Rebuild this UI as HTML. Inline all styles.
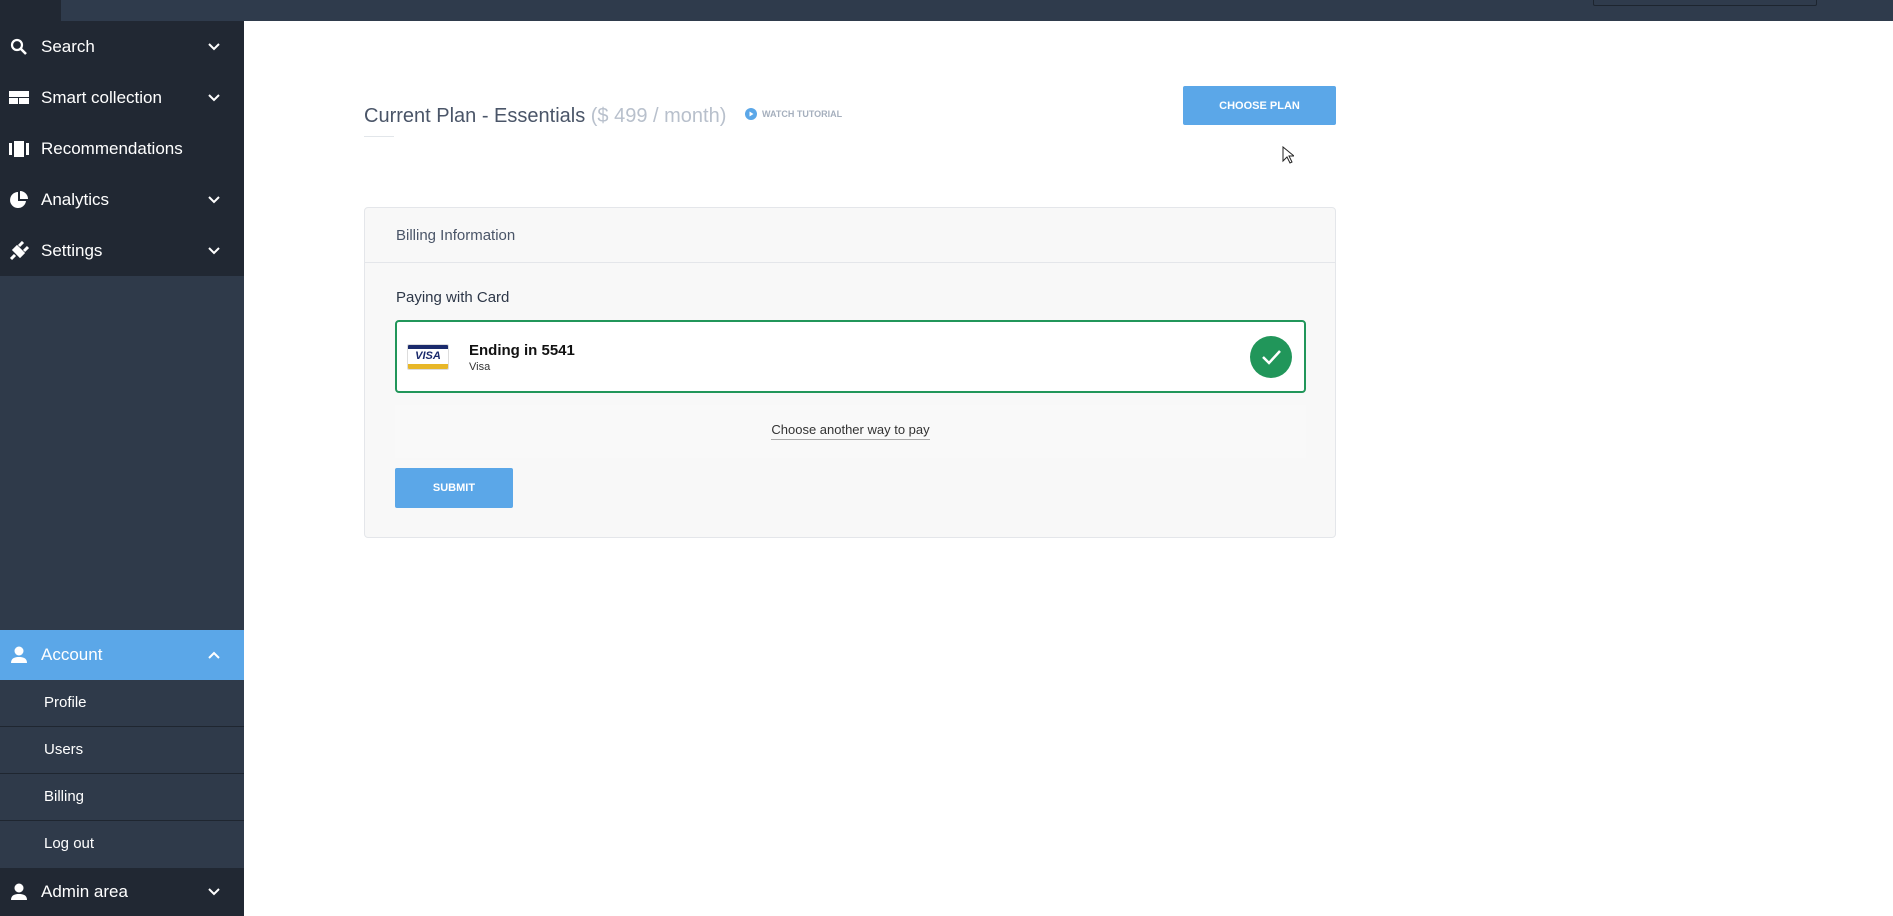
<!DOCTYPE html>
<html><head><meta charset="utf-8"><style>
*{margin:0;padding:0;box-sizing:border-box}
body{width:1893px;height:916px;overflow:hidden;background:#fff;font-family:"Liberation Sans",sans-serif;position:relative}
.top{position:absolute;left:61px;top:0;width:1832px;height:21px;background:#2f3b4c}
.srch{position:absolute;left:1532px;top:-2px;width:224px;height:8px;border:1px solid #1d252f;border-radius:2px}
.side{position:absolute;left:0;top:0;width:244px;height:916px;background:#2f3a4a}
.dark{position:absolute;left:0;top:0;width:244px;height:276px;background:#212833}
.item{position:absolute;left:0;width:244px;height:51px;color:#fff;font-size:17px;display:flex;align-items:center}
.item .ic{position:absolute;left:9px;top:50%;transform:translateY(-50%);width:20px;height:20px}
.item .tx{position:absolute;left:41px}
.item .ch{position:absolute;left:208px;top:50%;transform:translateY(-50%)}
.sub{position:absolute;left:0;width:244px;height:47px;border-bottom:1px solid #1f2630;color:#fff;font-size:15px;line-height:46px;padding-left:44px}
h1{position:absolute;left:364px;top:105px;font-weight:normal;font-size:20px;color:#4a5568;white-space:nowrap}
h1 span{color:#b8c0cc}
.ul{position:absolute;left:364px;top:136px;width:30px;height:1px;background:#e2e6ea}
.wt{position:absolute;left:745px;top:108px;font-size:9px;font-weight:bold;color:#a5afbd;display:flex;align-items:center;gap:5px}
.btn{position:absolute;background:#5ba7e8;color:#fff;font-weight:bold;font-size:11px;display:flex;align-items:center;justify-content:center;border-radius:2px}
.card{position:absolute;left:364px;top:207px;width:972px;height:331px;background:#f8f8f8;border:1px solid #e4e6ea;border-radius:4px}
.ch2{position:absolute;left:0;top:0;width:100%;height:55px;border-bottom:1px solid #e4e6ea;font-size:15px;color:#4a5568;padding-left:31px;line-height:55px}
</style></head><body>
<div class="side">
<div class="dark"></div>
<div class="item" style="top:21px"><svg class="ic" viewBox="0 0 20 20"><circle cx="8" cy="8" r="5" fill="none" stroke="#fff" stroke-width="2.2"/><path d="M12 12l5 5" stroke="#fff" stroke-width="2.6"/></svg><span class="tx">Search</span><svg class="ch" width="12" height="8" viewBox="0 0 12 8"><path d="M1 1l5 5 5-5" fill="none" stroke="#fff" stroke-width="2"/></svg></div>
<div class="item" style="top:72px"><svg class="ic" viewBox="0 0 20 20"><rect x="0" y="3" width="20" height="6" fill="#fff"/><rect x="0" y="10" width="9" height="6" fill="#fff"/><rect x="10" y="10" width="10" height="6" fill="#fff"/></svg><span class="tx">Smart collection</span><svg class="ch" width="12" height="8" viewBox="0 0 12 8"><path d="M1 1l5 5 5-5" fill="none" stroke="#fff" stroke-width="2"/></svg></div>
<div class="item" style="top:123px"><svg class="ic" viewBox="0 0 20 20"><rect x="0" y="4" width="3" height="12" fill="#fff"/><rect x="5" y="2" width="10" height="16" fill="#fff"/><rect x="17" y="4" width="3" height="12" fill="#fff"/></svg><span class="tx">Recommendations</span></div>
<div class="item" style="top:174px"><svg class="ic" viewBox="0 0 20 20"><path d="M9 2a8 8 0 1 0 8 9H9z" fill="#fff"/><path d="M11 1v8h8a8 8 0 0 0-8-8z" fill="#fff"/></svg><span class="tx">Analytics</span><svg class="ch" width="12" height="8" viewBox="0 0 12 8"><path d="M1 1l5 5 5-5" fill="none" stroke="#fff" stroke-width="2"/></svg></div>
<div class="item" style="top:225px"><svg class="ic" viewBox="0 0 20 20"><path d="M2 18l4-4M5 9l6 6 3-3-6-6zM10 5l4-4M15 10l4-4" stroke="#fff" stroke-width="3" fill="#fff"/></svg><span class="tx">Settings</span><svg class="ch" width="12" height="8" viewBox="0 0 12 8"><path d="M1 1l5 5 5-5" fill="none" stroke="#fff" stroke-width="2"/></svg></div>
<div class="item" style="top:630px;height:50px;background:#5ba7e8"><svg class="ic" viewBox="0 0 20 20"><circle cx="10" cy="6" r="4.5" fill="#fff"/><path d="M2 18c0-5 4-6 8-6s8 1 8 6z" fill="#fff"/></svg><span class="tx">Account</span><svg class="ch" width="12" height="8" viewBox="0 0 12 8"><path d="M1 7l5-5 5 5" fill="none" stroke="#fff" stroke-width="2"/></svg></div>
<div class="sub" style="top:680px">Profile</div>
<div class="sub" style="top:727px">Users</div>
<div class="sub" style="top:774px">Billing</div>
<div class="sub" style="top:821px;border:none">Log out</div>
<div class="item" style="top:868px;height:48px;background:#212833"><svg class="ic" viewBox="0 0 20 20"><circle cx="10" cy="6" r="4.5" fill="#fff"/><path d="M2 18c0-5 4-6 8-6s8 1 8 6z" fill="#fff"/></svg><span class="tx">Admin area</span><svg class="ch" width="12" height="8" viewBox="0 0 12 8"><path d="M1 1l5 5 5-5" fill="none" stroke="#fff" stroke-width="2"/></svg></div>
</div>
<div class="top"><div class="srch"></div></div>
<h1>Current Plan - Essentials <span>($ 499 / month)</span></h1>
<div class="ul"></div>
<div class="wt"><svg width="12" height="12" viewBox="0 0 12 12"><circle cx="6" cy="6" r="6" fill="#5ba7e8"/><path d="M4.5 3.5l4 2.5-4 2.5z" fill="#fff"/></svg>WATCH TUTORIAL</div>
<div class="btn" style="left:1183px;top:86px;width:153px;height:39px">CHOOSE PLAN</div>
<svg style="position:absolute;left:1282px;top:146px" width="12" height="18" viewBox="0 0 12 18"><path d="M1 1v14l4-4 3 6 2-1-3-6h5z" fill="#fff" stroke="#222" stroke-width="1"/></svg>
<div class="card">
<div class="ch2">Billing Information</div>
<div style="position:absolute;left:31px;top:81px;font-size:15px;color:#2d3748">Paying with Card</div>
<div style="position:absolute;left:30px;top:112px;width:911px;height:73px;background:#fff;border:2px solid #21965a;border-radius:4px">
<div style="position:absolute;left:10px;top:22px;width:42px;height:26px;background:#fff;border:1px solid #ddd;border-radius:2px;overflow:hidden"><div style="height:4px;background:#1a2a6c"></div><div style="font-size:11px;font-weight:bold;font-style:italic;color:#1a2a6c;text-align:center;line-height:14px">VISA</div><div style="position:absolute;bottom:0;left:0;right:0;height:5px;background:#e8b728"></div></div>
<div style="position:absolute;left:72px;top:20px;font-size:15px;font-weight:bold;color:#111">Ending in 5541</div>
<div style="position:absolute;left:72px;top:39px;font-size:11px;color:#333">Visa</div>
<div style="position:absolute;left:853px;top:14px;width:42px;height:42px;border-radius:50%;background:#21965a"><svg width="42" height="42" viewBox="0 0 42 42"><path d="M13 21l6 6 11-12" fill="none" stroke="#fff" stroke-width="2.5"/></svg></div>
</div>
<div style="position:absolute;left:30px;top:197px;width:911px;height:53px;background:#f9f9f9;text-align:center;line-height:50px;font-size:13px;color:#333"><span style="border-bottom:1px solid #aaa;padding-bottom:2px">Choose another way to pay</span></div>
<div class="btn" style="left:30px;top:260px;width:118px;height:40px">SUBMIT</div>
</div>
</body></html>
